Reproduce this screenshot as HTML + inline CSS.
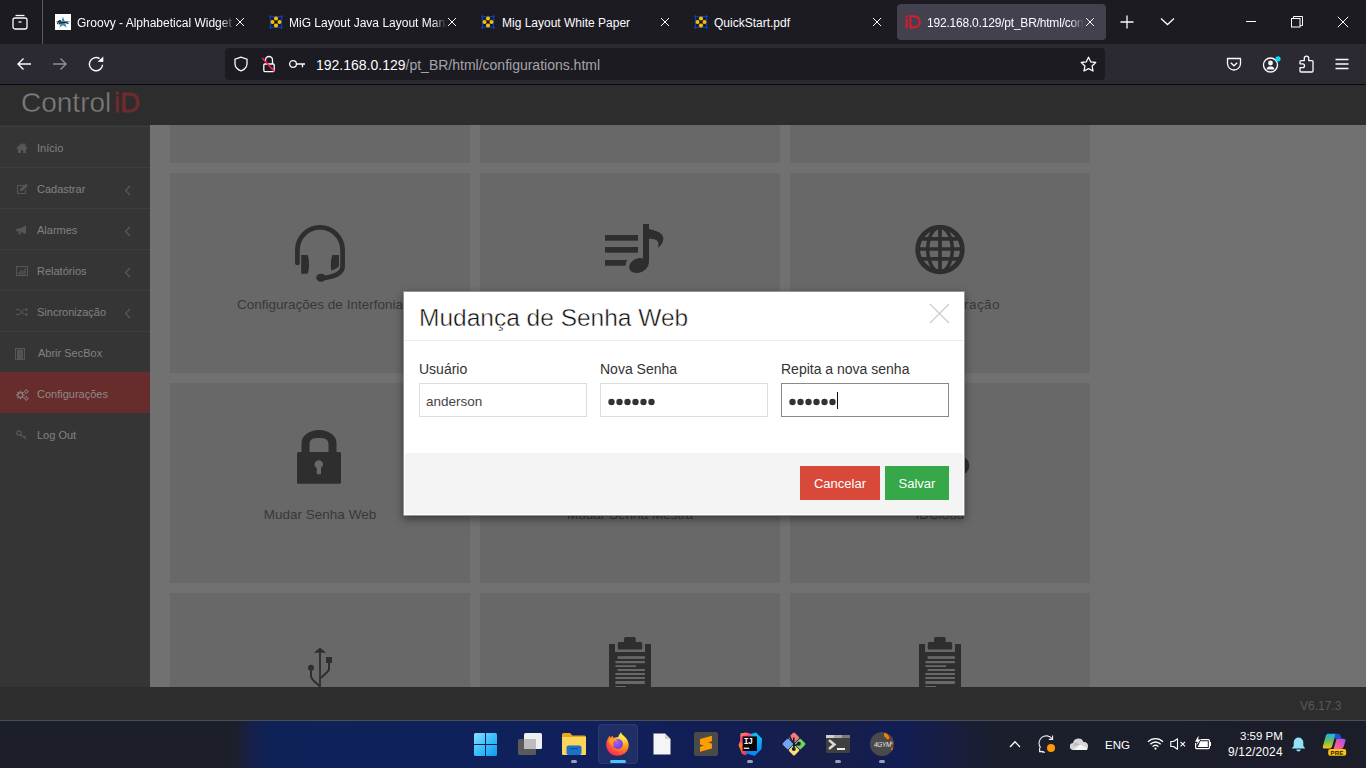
<!DOCTYPE html>
<html><head><meta charset="utf-8">
<style>
*{box-sizing:border-box;margin:0;padding:0}
html,body{width:1366px;height:768px;overflow:hidden;background:#000;font-family:"Liberation Sans",sans-serif}
.a{position:absolute}
/* browser chrome */
#tabbar{left:0;top:0;width:1366px;height:44px;background:#1c1b22}
#navbar{left:0;top:44px;width:1366px;height:40px;background:#2b2a33}
#navline{left:0;top:84px;width:1366px;height:1px;background:#0b0b0c}
.tab{top:4px;height:36px;color:#fbfbfe;font-size:13px;white-space:nowrap;overflow:hidden}
.tabt{top:15px;height:18px;line-height:16px;font-size:12px;color:#fbfbfe;white-space:nowrap;overflow:hidden}
.fade{-webkit-mask-image:linear-gradient(to right,#000 91%,transparent)}
#urlbar{left:225px;top:48px;width:880px;height:32px;background:#1c1b22;border-radius:4px}
/* page */
#hdr{left:0;top:85px;width:1366px;height:40px;background:#2d2d2d}
#side{left:0;top:125px;width:150px;height:562px;background:#353535}
.si{left:0;width:150px;height:41px;border-top:1px solid #3d3d3d;color:#6e6e6e;font-size:12px}
#content{left:150px;top:125px;width:1216px;height:562px;background:#717171;overflow:hidden}
.tile{width:300px;height:200px;background:#686868}
.tt{color:#383838;font-size:13.5px;line-height:16px;text-align:center;width:300px;white-space:nowrap}
#footer{left:0;top:687px;width:1366px;height:33px;background:#2d2d2d}
/* modal */
#modal{left:403px;top:291px;width:562px;height:225px;background:#fff;border:1px solid rgba(0,0,0,.42);border-radius:1px;box-shadow:0 3px 9px rgba(0,0,0,.45)}
.lbl{top:68px;font-size:14px;line-height:18px;color:#333;white-space:nowrap}
.inp{top:91px;width:168px;height:34px;border:1px solid #ddd;background:#fff}
.dots{position:absolute;left:7px;top:14px}
.btn{top:13px;height:34px;color:#fff;font-size:13px;line-height:36px;text-align:center}
#taskbar{left:0;top:720px;width:1366px;height:48px;background:linear-gradient(to right,#1c1f27 0%,#1c1f29 17.2%,#16204a 18.4%,#0f2258 19.6%,#0f205c 44%,#131e52 54%,#171e48 60%,#121d54 66%,#181e3c 70%,#1b1e2c 73%,#1b1e29 100%)}

.si .st{position:absolute;left:37px;top:14px;font-size:11px;line-height:14px;color:#828282;white-space:nowrap}
.si .ic{position:absolute;top:10px;color:#5a5a5a}
.si .chev{position:absolute;left:124px;top:17px;width:7px;height:11px;background:no-repeat}
#ver{left:1300px;top:699px;font-size:12px;line-height:14px;color:#595959;}
</style></head><body>
<div id="tabbar" class="a"></div>
<div id="navbar" class="a"></div>
<div id="navline" class="a"></div>
<div id="urlbar" class="a"></div>

<!-- tab bar content -->
<svg class="a" style="left:11px;top:13px" width="18" height="18" viewBox="0 0 18 18" fill="none" stroke="#fbfbfe" stroke-width="1.3">
  <path d="M4.5 2.5h9"/><rect x="2" y="5" width="14" height="11" rx="2"/><path d="M7.5 9h3"/>
</svg>
<div class="a" style="left:42px;top:0;width:1px;height:44px;background:#5a5960"></div>

<!-- tab1 groovy -->
<svg class="a" style="left:55px;top:14px" width="16" height="16" viewBox="0 0 16 16">
  <rect width="16" height="16" fill="#fff"/>
  <path d="M8 2.8l1.5 4.2h4.4l-3.6 2.6 1.4 4L8 11.2l-3.7 2.4 1.4-4L2.1 7h4.4z" fill="#3d8fb0"/>
  <path d="M1 7.8H15" stroke="#4a9ab5" stroke-width=".8"/>
  <path d="M2.5 10c.5-2 1.5-3.5 2.5-3.5S5 9 4 10.5M5.5 9.5c1-1 2-.5 3-1s1.5-.5 2.5 0 1.5 1 2.5.8" stroke="#1a1a1a" stroke-width="1.1" fill="none"/>
</svg>
<div class="a tabt fade" style="left:77px;width:158px;">Groovy - Alphabetical Widget Index</div>
<svg class="a" style="left:235px;top:17px" width="10" height="10" viewBox="0 0 10 10" stroke="#fbfbfe" stroke-width="1"><path d="M1 1l8 8M9 1l-8 8"/></svg>

<!-- tab2 mig -->
<svg class="a" style="left:269px;top:15px" width="14" height="14" viewBox="0 0 14 14">
  <path d="M0 1.5H14M0 12.5H14M1.5 0V14M12.5 0V14" stroke="#0b3fb8" stroke-width="1.2"/>
  <g fill="#f7bd00"><circle cx="7" cy="3.6" r="2.1"/><circle cx="7" cy="10.4" r="2.1"/><circle cx="3.6" cy="7" r="2.1"/><circle cx="10.4" cy="7" r="2.1"/></g>
  <rect x="5.6" y="5.6" width="2.8" height="2.8" fill="#101838"/>
</svg>
<div class="a tabt fade" style="left:289px;width:158px;">MiG Layout Java Layout Manager</div>
<svg class="a" style="left:447px;top:17px" width="10" height="10" viewBox="0 0 10 10" stroke="#fbfbfe" stroke-width="1"><path d="M1 1l8 8M9 1l-8 8"/></svg>

<!-- tab3 -->
<svg class="a" style="left:481px;top:15px" width="14" height="14" viewBox="0 0 14 14">
  <path d="M0 1.5H14M0 12.5H14M1.5 0V14M12.5 0V14" stroke="#0b3fb8" stroke-width="1.2"/>
  <g fill="#f7bd00"><circle cx="7" cy="3.6" r="2.1"/><circle cx="7" cy="10.4" r="2.1"/><circle cx="3.6" cy="7" r="2.1"/><circle cx="10.4" cy="7" r="2.1"/></g>
  <rect x="5.6" y="5.6" width="2.8" height="2.8" fill="#101838"/>
</svg>
<div class="a tabt" style="left:502px;width:150px;">Mig Layout White Paper</div>
<svg class="a" style="left:660px;top:17px" width="10" height="10" viewBox="0 0 10 10" stroke="#fbfbfe" stroke-width="1"><path d="M1 1l8 8M9 1l-8 8"/></svg>

<!-- tab4 -->
<svg class="a" style="left:694px;top:15px" width="14" height="14" viewBox="0 0 14 14">
  <path d="M0 1.5H14M0 12.5H14M1.5 0V14M12.5 0V14" stroke="#0b3fb8" stroke-width="1.2"/>
  <g fill="#f7bd00"><circle cx="7" cy="3.6" r="2.1"/><circle cx="7" cy="10.4" r="2.1"/><circle cx="3.6" cy="7" r="2.1"/><circle cx="10.4" cy="7" r="2.1"/></g>
  <rect x="5.6" y="5.6" width="2.8" height="2.8" fill="#101838"/>
</svg>
<div class="a tabt" style="left:714px;width:150px;">QuickStart.pdf</div>
<svg class="a" style="left:872px;top:17px" width="10" height="10" viewBox="0 0 10 10" stroke="#fbfbfe" stroke-width="1"><path d="M1 1l8 8M9 1l-8 8"/></svg>

<!-- tab5 selected -->
<div class="a" style="left:897px;top:4px;width:209px;height:36px;background:#42414d;border-radius:4px"></div>
<svg class="a" style="left:905px;top:15px" width="16" height="14" viewBox="0 0 16 14"><rect x="0.6" y="0.6" width="2.2" height="2.2" rx="1" fill="#e3182d"/><rect x="0.7" y="4" width="2" height="9" fill="#e3182d"/><path d="M5.4 1.3H9.2A5.6 5.6 0 0 1 9.2 12.5H5.4z" fill="none" stroke="#e3182d" stroke-width="2"/></svg>
<div class="a tabt fade" style="left:927px;width:157px;letter-spacing:-0.2px">192.168.0.129/pt_BR/html/configurations.html</div>
<svg class="a" style="left:1085px;top:17px" width="10" height="10" viewBox="0 0 10 10" stroke="#fbfbfe" stroke-width="1"><path d="M1 1l8 8M9 1l-8 8"/></svg>

<svg class="a" style="left:1120px;top:15px" width="14" height="14" viewBox="0 0 14 14" stroke="#fbfbfe" stroke-width="1.3"><path d="M7 0.5v13M0.5 7h13"/></svg>
<svg class="a" style="left:1160px;top:17px" width="15" height="9" viewBox="0 0 15 9" fill="none" stroke="#fbfbfe" stroke-width="1.3"><path d="M1 1.5l6.5 6 6.5-6"/></svg>

<!-- window controls -->
<div class="a" style="left:1246px;top:21px;width:10px;height:1px;background:#fff"></div>
<svg class="a" style="left:1291px;top:16px" width="12" height="12" viewBox="0 0 12 12" fill="none" stroke="#fff" stroke-width="1"><rect x="0.5" y="2.5" width="8.5" height="8.5"/><path d="M2.5 2.5V0.5h9v9h-2.5"/></svg>
<svg class="a" style="left:1337px;top:16px" width="12" height="12" viewBox="0 0 12 12" stroke="#fff" stroke-width="1"><path d="M0.8 0.8l10.4 10.4M11.2 0.8L0.8 11.2"/></svg>

<!-- nav bar -->
<svg class="a" style="left:16px;top:56px" width="16" height="16" viewBox="0 0 16 16" fill="none" stroke="#fbfbfe" stroke-width="1.4"><path d="M15 8H2M7.5 2.5L2 8l5.5 5.5"/></svg>
<svg class="a" style="left:52px;top:56px" width="16" height="16" viewBox="0 0 16 16" fill="none" stroke="#8f8f9d" stroke-width="1.4"><path d="M1 8h13M8.5 2.5L14 8l-5.5 5.5"/></svg>
<svg class="a" style="left:88px;top:56px" width="17" height="17" viewBox="0 0 17 17" fill="none" stroke="#fbfbfe" stroke-width="1.4"><path d="M14.6 8.8A6.6 6.6 0 1 1 11.6 2.6"/><path d="M9.6 5.7L15.3 0.6V5.9z" fill="#fbfbfe" stroke="none"/></svg>

<svg class="a" style="left:233px;top:56px" width="16" height="16" viewBox="0 0 16 16" fill="none" stroke="#fbfbfe" stroke-width="1.3"><path d="M8 1.2L2 3.2v4.3c0 3.6 2.6 6.2 6 7.3 3.4-1.1 6-3.7 6-7.3V3.2z"/></svg>
<svg class="a" style="left:261px;top:55px" width="16" height="18" viewBox="0 0 16 18" fill="none"><path d="M4.5 6.5V5a3.5 3.5 0 0 1 7 0v4" stroke="#fbfbfe" stroke-width="1.3"/><rect x="2.8" y="9" width="10.4" height="7.6" rx="1" stroke="#fbfbfe" stroke-width="1.3"/><path d="M1.2 3l12.5 13.8" stroke="#ff1e55" stroke-width="1.5"/></svg>
<svg class="a" style="left:288px;top:58px" width="18" height="12" viewBox="0 0 18 12" fill="none" stroke="#fbfbfe" stroke-width="1.3"><circle cx="5" cy="6" r="3.4"/><path d="M8.4 6H17M14.5 6v3.2"/></svg>
<div class="a" style="left:316px;top:57px;font-size:14px;color:#fbfbfe;white-space:nowrap">192.168.0.129<span style="color:#a5a4ad">/pt_BR/html/configurations.html</span></div>
<svg class="a" style="left:1080px;top:56px" width="17" height="17" viewBox="0 0 17 17" fill="none" stroke="#fbfbfe" stroke-width="1.3" stroke-linejoin="round"><path d="M8.5 1.2l2.2 4.6 5 .7-3.6 3.5.9 5-4.5-2.4-4.5 2.4.9-5L1.3 6.5l5-.7z"/></svg>

<svg class="a" style="left:1226px;top:57px" width="16" height="15" viewBox="0 0 16 15" fill="none" stroke="#fbfbfe" stroke-width="1.3"><path d="M1.5 1.5h13v5a6.5 6.5 0 0 1-13 0z" stroke-linejoin="round"/><path d="M4.8 5.8L8 8.8l3.2-3"/></svg>
<svg class="a" style="left:1262px;top:56px" width="19" height="17" viewBox="0 0 19 17" fill="none"><circle cx="8.5" cy="9" r="7" stroke="#fbfbfe" stroke-width="1.3"/><circle cx="8.5" cy="7" r="2.4" fill="#fbfbfe"/><path d="M4.5 13.5c.5-2.5 2-3 4-3s3.5.5 4 3" fill="#fbfbfe"/><circle cx="16" cy="2.8" r="2.6" fill="#0df" /></svg>
<svg class="a" style="left:1298px;top:55px" width="17" height="19" viewBox="0 0 17 19" fill="none" stroke="#fbfbfe" stroke-width="1.3" stroke-linejoin="round"><path d="M6.3 5.6V3.3A2.2 2.2 0 0 1 10.7 3.3V5.6H14Q15 5.6 15 6.6V16Q15 17 14 17H3Q2 17 2 16V12.6H4.6A1.9 1.9 0 0 0 4.6 8.8H2V6.6Q2 5.6 3 5.6Z"/></svg>
<svg class="a" style="left:1335px;top:58px" width="14" height="12" viewBox="0 0 14 12" stroke="#fbfbfe" stroke-width="1.3"><path d="M0.5 1.5h13M0.5 6h13M0.5 10.5h13"/></svg>



<div id="hdr" class="a">
  <div class="a" style="left:21px;top:2px;font-size:28px;line-height:32px;color:#7b7b7b;white-space:nowrap;-webkit-text-stroke:0.35px #2d2d2d">Control</div>
  <div class="a" style="left:114px;top:2px;font-size:28px;line-height:32px;color:#6e2a30;white-space:nowrap;letter-spacing:-0.3px;-webkit-text-stroke:0.8px #6e2a30">iD</div>
</div>
<div id="side" class="a">
  <div class="a si" style="top:1px"><span class="st">Início</span></div>
  <div class="a si" style="top:42px"><span class="st">Cadastrar</span><svg class="chev" viewBox="0 0 7 11" fill="none" stroke="#5a5a5a" stroke-width="1.2"><path d="M6 1L1.5 5.5 6 10"/></svg></div>
  <div class="a si" style="top:83px"><span class="st">Alarmes</span><svg class="chev" viewBox="0 0 7 11" fill="none" stroke="#5a5a5a" stroke-width="1.2"><path d="M6 1L1.5 5.5 6 10"/></svg></div>
  <div class="a si" style="top:124px"><span class="st">Relatórios</span><svg class="chev" viewBox="0 0 7 11" fill="none" stroke="#5a5a5a" stroke-width="1.2"><path d="M6 1L1.5 5.5 6 10"/></svg></div>
  <div class="a si" style="top:165px"><span class="st">Sincronização</span><svg class="chev" viewBox="0 0 7 11" fill="none" stroke="#5a5a5a" stroke-width="1.2"><path d="M6 1L1.5 5.5 6 10"/></svg></div>
  <div class="a si" style="top:206px"><span class="st" style="left:38px">Abrir SecBox</span></div>
  <div class="a si" style="top:247px;background:#672c2c;border-top-color:#672c2c"><span class="st" style="color:#8f8a8a">Configurações</span></div>
  <div class="a si" style="top:288px;border-top-color:#353535"><span class="st">Log Out</span></div>
</div>


<svg class="a" style="left:16px;top:143px" width="12" height="10" viewBox="0 0 12 10" fill="#575757"><path d="M6 0L0.3 5l.8.9L2 5.2V10h3V7h2v3h3V5.2l.9.7.8-.9L9.5 3V0.5H8.3v1.4z"/></svg>
<svg class="a" style="left:16px;top:184px" width="12" height="10" viewBox="0 0 12 10" fill="none" stroke="#575757" stroke-width="1.1"><path d="M8 1.5H1.5v8h8V6"/><path d="M4.5 6.5l.5-1.8 5-4.2 1.2 1.2-4.5 4.4z" fill="#575757"/></svg>
<svg class="a" style="left:16px;top:225px" width="12" height="10" viewBox="0 0 12 10" fill="#575757"><path d="M0.5 3.5h3L10 0.5v8.5L3.5 6.5h-3z"/><path d="M2 6.5h2l.8 3H3z"/></svg>
<svg class="a" style="left:16px;top:266px" width="12" height="10" viewBox="0 0 12 10" fill="none" stroke="#575757" stroke-width="1"><rect x="0.5" y="0.5" width="11" height="9"/><path d="M3 8.5V6M5 8.5V4M7 8.5V5M9 8.5V2.5" stroke-width="1.3"/></svg>
<svg class="a" style="left:16px;top:307px" width="12" height="10" viewBox="0 0 12 10" fill="none" stroke="#575757" stroke-width="1.2"><path d="M0 2.5h2.5c2.5 0 4 5 6.5 5h2M0 7.5h2.5c1 0 1.8-.8 2.5-1.8M6.8 3.5c.6-.6 1.3-1 2.2-1h2"/><path d="M10 0.5l2 2-2 2zM10 5.5l2 2-2 2z" fill="#575757" stroke="none"/></svg>
<svg class="a" style="left:15px;top:348px" width="11" height="12" viewBox="0 0 11 12" fill="#575757"><path d="M0 0h10v12H0zM1 11h8V1H1z"/><rect x="2" y="1.5" width="6" height="10" fill="#555"/><rect x="5.5" y="5.5" width="1.2" height="1" fill="#353535"/></svg>
<svg class="a" style="left:16px;top:389px" width="13" height="12" viewBox="0 0 13 12" fill="none" stroke="#8f7f7f" stroke-width="1.2">
  <circle cx="4.4" cy="6" r="2.4"/>
  <path d="M4.4 1.8V3.2M4.4 8.8V10.2M0.2 6H1.6M7.2 6H8.6M1.4 3L2.4 4M6.4 8L7.4 9M1.4 9L2.4 8M6.4 4L7.4 3" stroke-width="1.4"/>
  <circle cx="10.3" cy="2.6" r="1.5" stroke-width="1"/><circle cx="10.3" cy="9.4" r="1.5" stroke-width="1"/>
  <path d="M10.3 0.2V0.9M10.3 4.3V5M8 2.6H8.6M12 2.6H12.6M10.3 7V7.7M10.3 11.1V11.8M8 9.4H8.6M12 9.4H12.6" stroke-width="1"/>
</svg>
<svg class="a" style="left:16px;top:430px" width="11" height="10" viewBox="0 0 11 10" fill="none" stroke="#575757" stroke-width="1.3"><circle cx="3" cy="3" r="2.2"/><path d="M4.6 4.6L10 9M8 7.3l1.5-1.3"/></svg>
<div id="content" class="a">
  <div class="a tile" style="left:20px;top:-162px"></div>
  <div class="a tile" style="left:330px;top:-162px"></div>
  <div class="a tile" style="left:640px;top:-162px"></div>
  <div class="a tile" style="left:20px;top:48px"></div>
  <div class="a tile" style="left:330px;top:48px"></div>
  <div class="a tile" style="left:640px;top:48px"></div>
  <div class="a tile" style="left:20px;top:258px"></div>
  <div class="a tile" style="left:330px;top:258px"></div>
  <div class="a tile" style="left:640px;top:258px"></div>
  <div class="a tile" style="left:20px;top:468px"></div>
  <div class="a tile" style="left:330px;top:468px"></div>
  <div class="a tile" style="left:640px;top:468px"></div>
</div>

<!-- tile icons & text -->
<svg class="a" style="left:295px;top:225px" width="50" height="58" viewBox="0 0 50 58" fill="none">
  <path d="M2.4 38V25A22.6 22.6 0 0 1 47.6 25V41C47.6 48 40 51.5 30 52.8" stroke="#2e2e2e" stroke-width="4.7" stroke-linecap="round"/>
  <path d="M6.2 30H12.5C14.5 34 14.5 45 12.5 48.8H6.2z" fill="#2e2e2e"/>
  <path d="M44 30H37.5C35.6 34 35.5 41 36.2 45.5C39.5 44.5 42.5 43 44 41z" fill="#2e2e2e"/>
  <ellipse cx="26" cy="52.7" rx="4.8" ry="4" fill="#2e2e2e"/>
</svg>
<div class="a tt" style="left:170px;top:297px">Configurações de Interfonia</div>

<svg class="a" style="left:605px;top:223px" width="60" height="52" viewBox="0 0 60 52" fill="#2e2e2e">
  <rect x="0" y="12" width="33" height="5.7"/><rect x="0" y="24" width="33" height="5.7"/>
  <path d="M0 37H22.5C21.3 38.5 20.7 40.5 20.5 42.7H0z"/>
  <path d="M38 1H44V6C50 7.5 57 9 58.2 14.5C59 19 56 22.5 53 25C54 21.5 53.5 18 51 17C49 16 46 15.8 44 15.8V38.5C44 45 38 50 32 50C26.5 50 24 47 24.2 44C24.5 39 30 35 35 35C36 35 37 35.2 38 35.5z"/>
</svg>
<div class="a tt" style="left:480px;top:297px">Configurações de Áudio</div>

<svg class="a" style="left:915px;top:225px" width="50" height="50" viewBox="0 0 50 50" fill="none" stroke="#2e2e2e">
  <circle cx="25" cy="24.5" r="22.3" stroke-width="4.7"/>
  <ellipse cx="25" cy="24.5" rx="12.3" ry="22.3" stroke-width="3.5"/>
  <clipPath id="gclip"><circle cx="25" cy="24.5" r="23"/></clipPath><path clip-path="url(#gclip)" d="M25 2V47M2 13.8H48M2 24H48M2 33.9H48" stroke-width="3.7"/>
</svg>
<div class="a tt" style="left:700px;top:297px;text-align:right;letter-spacing:0.45px">Modo de Operação</div>

<svg class="a" style="left:297px;top:430px" width="44" height="54" viewBox="0 0 44 54" fill="#2e2e2e">
  <path d="M4.5 22V13A17.5 13 0 0 1 39.5 13V22H31.5V14.5C31.5 9 28 8 22 8C16 8 12.5 9 12.5 14.5V22z"/>
  <rect x="0" y="22" width="44" height="31.7" rx="1.5"/>
  <circle cx="21.8" cy="34.4" r="4.2" fill="#686868"/><rect x="19.8" y="35" width="4.2" height="9.2" fill="#686868"/>
</svg>
<div class="a tt" style="left:170px;top:507px">Mudar Senha Web</div>

<svg class="a" style="left:600px;top:425px" width="60" height="60" viewBox="0 0 60 60" fill="#2e2e2e">
  <path d="M9 22V15A21 14 0 0 1 51 15V22H43V16C43 10 38 8 30 8C22 8 17 10 17 16V22z"/><rect x="4" y="22" width="52" height="34" rx="2"/>
</svg>
<div class="a tt" style="left:480px;top:507px">Mudar Senha Mestra</div>

<svg class="a" style="left:905px;top:440px" width="70" height="50" viewBox="0 0 70 50" fill="#2e2e2e">
  <circle cx="55" cy="25.7" r="9.3"/><circle cx="38" cy="18" r="14"/><circle cx="20" cy="28" r="10"/><rect x="18" y="26" width="38" height="12"/>
</svg>
<div class="a tt" style="left:790px;top:507px">IDCloud</div>

<svg class="a" style="left:306px;top:646px" width="28" height="42" viewBox="0 0 28 42" fill="#2e2e2e">
  <path d="M11 1.5L17.1 6.7H11.9V42H10.1V6.7H4.9z" transform="translate(3 0)"/>
  <circle cx="5" cy="21.7" r="3"/><rect x="20" y="11" width="6" height="6"/>
  <path d="M5 23V30C5 34 12 38 14 40.5M23 17V23C23 26 17 29 15 32" fill="none" stroke="#2e2e2e" stroke-width="2"/>
</svg>

<svg class="a" style="left:609px;top:637px" width="42" height="51" viewBox="0 0 42 51" fill="#2e2e2e">
  <path d="M0 7H6V15H36V7H42V51H0z"/>
  <rect x="15" y="0" width="11.7" height="6" rx="1.5"/><rect x="8.8" y="5" width="24.4" height="7.5" rx="1.5"/>
  <g fill="#686868"><rect x="8.6" y="19.2" width="27.3" height="2.7"/><rect x="6.4" y="24" width="29.5" height="2.2"/><rect x="6.4" y="28.2" width="20.7" height="1.8"/><rect x="8.6" y="32" width="27.3" height="2"/><rect x="6.4" y="36" width="29.5" height="2"/><rect x="6.4" y="40" width="29.5" height="2"/><rect x="6.4" y="44" width="29.5" height="3"/><rect x="6.4" y="49" width="10.4" height="1.2"/></g>
</svg>
<svg class="a" style="left:919px;top:637px" width="42" height="51" viewBox="0 0 42 51" fill="#2e2e2e">
  <path d="M0 7H6V15H36V7H42V51H0z"/>
  <rect x="15" y="0" width="11.7" height="6" rx="1.5"/><rect x="8.8" y="5" width="24.4" height="7.5" rx="1.5"/>
  <g fill="#686868"><rect x="8.6" y="19.2" width="27.3" height="2.7"/><rect x="6.4" y="24" width="29.5" height="2.2"/><rect x="6.4" y="28.2" width="20.7" height="1.8"/><rect x="8.6" y="32" width="27.3" height="2"/><rect x="6.4" y="36" width="29.5" height="2"/><rect x="6.4" y="40" width="29.5" height="2"/><rect x="6.4" y="44" width="29.5" height="3"/><rect x="6.4" y="49" width="10.4" height="1.2"/></g>
</svg>
<div id="footer" class="a"></div>
<div id="ver" class="a">V6.17.3</div>
<div id="modal" class="a">
  <div class="a" style="left:15px;top:11px;font-size:24.5px;line-height:30px;color:#111;white-space:nowrap;-webkit-text-stroke:0.45px #fff">Mudança de Senha Web</div>
  <svg class="a" style="left:525px;top:11px" width="21" height="21" viewBox="0 0 21 21" stroke="#cfcfcf" stroke-width="1.4"><path d="M1 1l19 19M20 1L1 20"/></svg>
  <div class="a" style="left:0;top:48px;width:559px;height:1px;background:#ececec"></div>
  <div class="a lbl" style="left:15px">Usuário</div>
  <div class="a lbl" style="left:196px">Nova Senha</div>
  <div class="a lbl" style="left:377px">Repita a nova senha</div>
  <div class="a inp" style="left:15px"><span style="position:absolute;left:6px;top:9px;font-size:13.5px;line-height:17px;color:#444">anderson</span></div>
  <div class="a inp" style="left:196px"><svg class="dots" width="48" height="8" viewBox="0 0 48 8"><g fill="#333"><circle cx="3.5" cy="4" r="3.2"/><circle cx="11.5" cy="4" r="3.2"/><circle cx="19.5" cy="4" r="3.2"/><circle cx="27.5" cy="4" r="3.2"/><circle cx="35.5" cy="4" r="3.2"/><circle cx="43.5" cy="4" r="3.2"/></g></svg></div>
  <div class="a inp" style="left:377px;border-color:#8a8a8a"><svg class="dots" width="48" height="8" viewBox="0 0 48 8"><g fill="#333"><circle cx="3.5" cy="4" r="3.2"/><circle cx="11.5" cy="4" r="3.2"/><circle cx="19.5" cy="4" r="3.2"/><circle cx="27.5" cy="4" r="3.2"/><circle cx="35.5" cy="4" r="3.2"/><circle cx="43.5" cy="4" r="3.2"/></g></svg><div style="position:absolute;left:55px;top:8px;width:1px;height:17px;background:#111"></div></div>
  <div class="a" style="left:1px;top:161px;width:558px;height:61px;background:#f4f4f4">
    <div class="a btn" style="left:395px;background:#d9493a;width:80px">Cancelar</div>
    <div class="a btn" style="left:480px;background:#36a84a;width:64px">Salvar</div>
  </div>
</div>
<div id="taskbar" class="a"></div>
<div class="a" style="left:0;top:720px;width:1366px;height:1px;background:#4a4e57"></div>
<!-- start -->
<svg class="a" style="left:474px;top:733px" width="23" height="23" viewBox="0 0 23 23">
  <defs><linearGradient id="wg" gradientUnits="userSpaceOnUse" x1="0" y1="0" x2="23" y2="23"><stop offset="0" stop-color="#8fdcfb"/><stop offset=".45" stop-color="#3fc4fa"/><stop offset="1" stop-color="#1597ee"/></linearGradient></defs>
  <g fill="url(#wg)"><path d="M0 1.5A1.5 1.5 0 0 1 1.5 0H11V11H0z"/><path d="M12 0H21.5A1.5 1.5 0 0 1 23 1.5V11H12z"/><path d="M0 12H11V23H1.5A1.5 1.5 0 0 1 0 21.5z"/><path d="M12 12H23V21.5A1.5 1.5 0 0 1 21.5 23H12z"/></g>
</svg>
<!-- task view -->
<svg class="a" style="left:518px;top:733px" width="25" height="22" viewBox="0 0 25 22">
  <rect x="0" y="6" width="18" height="16" rx="1.5" fill="#5a5a5a"/>
  <rect x="6" y="0" width="18" height="16" rx="1.5" fill="#f0f0f0"/>
  <rect x="6" y="6" width="12" height="10" fill="#bdbdbd"/>
</svg>
<!-- explorer -->
<svg class="a" style="left:562px;top:733px" width="24" height="22" viewBox="0 0 24 22">
  <path d="M0 1.5A1.5 1.5 0 0 1 1.5 0H8l2.5 2.5H22.5A1.5 1.5 0 0 1 24 4v16.5A1.5 1.5 0 0 1 22.5 22H1.5A1.5 1.5 0 0 1 0 20.5z" fill="#e7a81c"/>
  <path d="M0 4H24V20.5A1.5 1.5 0 0 1 22.5 22H1.5A1.5 1.5 0 0 1 0 20.5z" fill="#fcd55c"/>
  <rect x="4.5" y="12.5" width="15" height="9.5" rx="2" fill="#1a73c9"/><rect x="8" y="15" width="8" height="1.2" fill="#0e4f95"/>
</svg>
<div class="a" style="left:571px;top:760px;width:6px;height:3px;border-radius:2px;background:#9aa0b8"></div>
<!-- firefox (active) -->
<div class="a" style="left:598px;top:724px;width:40px;height:40px;border-radius:4px;background:rgba(255,255,255,.07);border:1px solid rgba(255,255,255,.05)"></div>
<svg class="a" style="left:606px;top:732px" width="23" height="24" viewBox="0 0 23 24">
  <defs><radialGradient id="ffg" cx="0.75" cy="0.15" r="1.05"><stop offset="0" stop-color="#fff44f"/><stop offset="0.3" stop-color="#ffc02a"/><stop offset="0.55" stop-color="#ff7a22"/><stop offset="0.8" stop-color="#ff3b4a"/><stop offset="1" stop-color="#f21b8a"/></radialGradient>
  <radialGradient id="ffp" cx="0.35" cy="0.3" r="0.8"><stop offset="0" stop-color="#b65cf9"/><stop offset="1" stop-color="#5a3fe0"/></radialGradient></defs>
  <path d="M15 0.3C15.5 2.5 17.5 3.5 19.5 5.5 22.5 8.5 23.3 12.5 22.3 16.3 20.8 21 16.5 23.8 11.5 23.8 5.2 23.8 0.2 18.8 0.2 12.5 0.2 9.8 1 7.5 2.3 5.8L3.5 3.6 4.5 5.6 6.8 3.8 7.3 6C8.8 5.2 10.5 5 12 5.3 12.8 3.3 13.8 1.5 15 0.3z" fill="url(#ffg)"/>
  <circle cx="12" cy="12" r="4.9" fill="url(#ffp)"/>
  <path d="M2.5 7.5C4 6 6 5.5 8 6.2 9.5 6.7 10.5 7.8 11.3 8.8 9.6 8.5 8.2 9 7.5 10.3 6.8 11.6 7.2 13 7.8 14 5.5 13.5 3.8 12 3 10 2.6 9.2 2.4 8.3 2.5 7.5z" fill="#ff9a26"/>
</svg>
<div class="a" style="left:610px;top:760px;width:16px;height:3px;border-radius:2px;background:#4cc2ff"></div>
<!-- notepad/file -->
<svg class="a" style="left:653px;top:733px" width="18" height="22" viewBox="0 0 18 22">
  <path d="M0.5 0.5H12L17.5 6V21.5H0.5z" fill="#f5f5f5"/><path d="M12 0.5V6H17.5z" fill="#cfcfcf"/>
</svg>
<!-- sublime -->
<svg class="a" style="left:694px;top:732px" width="24" height="24" viewBox="0 0 24 24">
  <rect width="24" height="24" rx="2" fill="#4a4a48"/>
  <path d="M6 7L17.9 3.7V9.3L14.2 10.4 17.9 11.5V16.4L6 19.75V14.75L9.8 13.6 6 12.5z" fill="#ff9d00"/>
  <path d="M6 12.5L17.9 16.4V11.5L6 7.6z" fill="#f39200" opacity="0"/>
</svg>
<!-- intellij -->
<svg class="a" style="left:738px;top:732px" width="24" height="24" viewBox="0 0 24 24">
  <defs><linearGradient id="ijl" x1="0" y1="0" x2="0.3" y2="1"><stop offset="0" stop-color="#fcb72b"/><stop offset=".35" stop-color="#ff318c"/><stop offset=".55" stop-color="#ff8a1f"/><stop offset="1" stop-color="#ff2e6e"/></linearGradient>
  <linearGradient id="ijr" x1="0.5" y1="0" x2="0.3" y2="1"><stop offset="0" stop-color="#07c3f2"/><stop offset="1" stop-color="#087cfa"/></linearGradient></defs>
  <path d="M2.5 1.5L8 0.5 14 2 13 12 8 23.5 4 22 0.5 13 2 9z" fill="url(#ijl)"/>
  <path d="M13 2L18 0.5 24 6.5 23.5 17 16.5 24 7 21 12 11z" fill="url(#ijr)"/>
  <rect x="4.6" y="4.4" width="14.4" height="14.6" fill="#0a0506"/>
  <text x="5.8" y="11.6" font-family="Liberation Mono" font-weight="700" font-size="8.2" fill="#fff" letter-spacing="-0.6">IJ</text>
  <rect x="5.8" y="15.6" width="5.4" height="1.4" fill="#ddd"/>
</svg>
<div class="a" style="left:747px;top:760px;width:6px;height:3px;border-radius:2px;background:#9aa0b8"></div>
<!-- git -->
<svg class="a" style="left:782px;top:732px" width="24" height="24" viewBox="0 0 24 24">
  <g transform="rotate(45 12 12)">
    <rect x="3.5" y="3.5" width="8.2" height="8.2" rx="1.5" fill="#f27a7a"/>
    <rect x="12.3" y="3.5" width="8.2" height="8.2" rx="1.5" fill="#72d05c"/>
    <rect x="12.3" y="12.3" width="8.2" height="8.2" rx="1.5" fill="#fbe06e"/>
    <rect x="3.5" y="12.3" width="8.2" height="8.2" rx="1.5" fill="#6ea6f6"/>
  </g>
  <path d="M7 3.2L10.8 10.4M11.8 5.5V17M11.8 14L16.8 11.8" stroke="#1b1e3a" stroke-width="1.6" fill="none"/><circle cx="11.8" cy="17" r="2" fill="#1b1e3a"/><circle cx="16.8" cy="11.8" r="2" fill="#1b1e3a"/>
</svg>
<!-- terminal -->
<svg class="a" style="left:826px;top:735px" width="24" height="18" viewBox="0 0 24 18">
  <rect width="24" height="18" rx="1.5" fill="#3f3f3f"/>
  <rect x="0" y="0" width="8" height="3" fill="#cfcfcf"/><rect x="8" y="0" width="8" height="3" fill="#a8a8a8"/><rect x="16" y="0" width="8" height="3" fill="#7a7a7a"/>
  <path d="M3.8 5.8L8.3 9.5 3.8 13.2" stroke="#d8d8d8" stroke-width="2.6" fill="none" stroke-linecap="round"/><rect x="11" y="13" width="8" height="2" fill="#eee"/>
</svg>
<div class="a" style="left:835px;top:760px;width:6px;height:3px;border-radius:2px;background:#9aa0b8"></div>
<!-- 4gym -->
<svg class="a" style="left:870px;top:732px" width="24" height="24" viewBox="0 0 24 24">
  <circle cx="12" cy="12" r="12" fill="#4a4a4a"/>
  <path d="M14 1.5c2-.5 3 .2 4 1.5l1.5 2.5-1 2-2-.5-1-2-1.5-.5zM20 9l2.5 1 .5 2.5-1.5-.5zM22.5 15l.5 2-1.5 1.5-.5-1.5z" fill="#ff7a00"/>
  <text x="4" y="15" font-family="Liberation Sans" font-style="italic" font-size="6.5" fill="#e8e8e8" letter-spacing="-0.3">4GYM</text>
</svg>
<div class="a" style="left:879px;top:760px;width:6px;height:3px;border-radius:2px;background:#9aa0b8"></div>

<!-- tray -->
<svg class="a" style="left:1009px;top:740px" width="12" height="8" viewBox="0 0 12 8" fill="none" stroke="#fff" stroke-width="1.3"><path d="M1 7L6 1.8 11 7"/></svg>
<svg class="a" style="left:1038px;top:735px" width="19" height="18" viewBox="0 0 19 18" fill="none" stroke="#f0f0f0" stroke-width="1.1">
  <path d="M14 3.6A7.2 7.2 0 0 0 2.6 12.6"/><path d="M14.6 0.6V4.4H10.8"/><path d="M1.6 12.6V16.6H5.6"/><path d="M2.5 16A7.2 7.2 0 0 0 7 17.2"/>
  <circle cx="13" cy="13" r="4" fill="#ff9a00" stroke="none"/>
</svg>
<svg class="a" style="left:1070px;top:738px" width="18" height="12" viewBox="0 0 18 12">
  <path d="M3.5 12A3.5 3.5 0 0 1 3 5 5.5 5.5 0 0 1 13.5 4 4 4 0 0 1 14.5 12z" fill="#d6d6d6"/>
  <path d="M3.5 12 10 6.5 17.5 10.5 17 12z" fill="#f4f4f4"/><path d="M5 4.5 10 6.5 3 8.5z" fill="#a8a8a8" opacity=".6"/>
</svg>
<div class="a" style="left:1105px;top:738px;font-size:11.5px;line-height:14px;color:#fff;font-weight:400;letter-spacing:0px">ENG</div>
<svg class="a" style="left:1147px;top:737px" width="17" height="13" viewBox="0 0 17 13" fill="none" stroke="#fff" stroke-width="1.3">
  <path d="M1 4.8A10.5 10.5 0 0 1 16 4.8"/><path d="M3.3 7.3A7 7 0 0 1 13.7 7.3"/><path d="M5.6 9.7A3.6 3.6 0 0 1 11.4 9.7"/><circle cx="8.5" cy="11.6" r="1.1" fill="#fff" stroke="none"/>
</svg>
<svg class="a" style="left:1170px;top:738px" width="17" height="12" viewBox="0 0 17 12" fill="none" stroke="#fff" stroke-width="1.1">
  <path d="M0.8 3.5H3.5L7.5 0.8V11.2L3.5 8.5H0.8z" stroke-linejoin="round"/><path d="M10.5 3.8l4.5 4.5M15 3.8l-4.5 4.5"/>
</svg>
<svg class="a" style="left:1194px;top:735px" width="18" height="15" viewBox="0 0 18 15" fill="none" stroke="#fff" stroke-width="1.2">
  <path d="M1.6 8V12.6Q1.6 13.6 2.6 13.6H14.4Q15.4 13.6 15.4 12.6V5.6Q15.4 4.6 14.4 4.6H6.6"/>
  <rect x="15.4" y="7" width="1.6" height="4" fill="#fff" stroke="none"/>
  <path d="M6.2 6.2H13.8V12H3.8z" fill="#fff" stroke="none"/>
  <path d="M4.6 0.4L1 6.8H3.6L2.4 10.4 6.6 4.6H4.2z" fill="#fff" stroke="none"/>
</svg>
<div class="a" style="left:1240px;top:729px;font-size:11.5px;line-height:14px;color:#fff;white-space:nowrap">3:59 PM</div>
<div class="a" style="left:1228px;top:745px;font-size:11.9px;line-height:14px;color:#fff;white-space:nowrap;letter-spacing:0.2px">9/12/2024</div>
<svg class="a" style="left:1291px;top:737px" width="15" height="15" viewBox="0 0 15 15" fill="#93e1f7">
  <path d="M7.5 0.5A4.8 4.8 0 0 1 12.3 5.3V9L14.3 11.5H0.7L2.7 9V5.3A4.8 4.8 0 0 1 7.5 0.5z"/><path d="M5.3 12.5H9.7A2.2 2 0 0 1 5.3 12.5z"/>
</svg>
<svg class="a" style="left:1322px;top:733px" width="25" height="24" viewBox="0 0 25 24">
  <defs><linearGradient id="cp1" x1="0" y1="0" x2="0" y2="1"><stop offset="0" stop-color="#19b0f8"/><stop offset=".5" stop-color="#6cbd55"/><stop offset="1" stop-color="#f9c513"/></linearGradient>
  <linearGradient id="cp2" x1="0" y1="1" x2="1" y2="0"><stop offset="0" stop-color="#ff6f6f"/><stop offset=".5" stop-color="#e056b8"/><stop offset="1" stop-color="#a350f5"/></linearGradient></defs>
  <path d="M5.8 0.7H13.8L10 13.6Q9.4 15.5 7.4 15.5H2.6Q0.3 15.5 0.9 13.2L3.9 2.6Q4.4 0.7 5.8 0.7z" fill="url(#cp1)"/>
  <path d="M13.8 0.7H16Q17.8 0.7 18.6 2.8L19.6 5.7H12.3z" fill="#1d55d6"/>
  <path d="M14.6 5.7H21.6Q23.9 5.7 23.4 8L21.6 14Q21 16 19 16H11.6z" fill="url(#cp2)"/>
  <rect x="6.2" y="16" width="18" height="6.8" rx="2" fill="#ffc107"/>
  <text x="8.6" y="21.6" font-family="Liberation Sans" font-weight="700" font-size="6" fill="#1a1a1a" letter-spacing="0.2">PRE</text>
</svg>
</body></html>
